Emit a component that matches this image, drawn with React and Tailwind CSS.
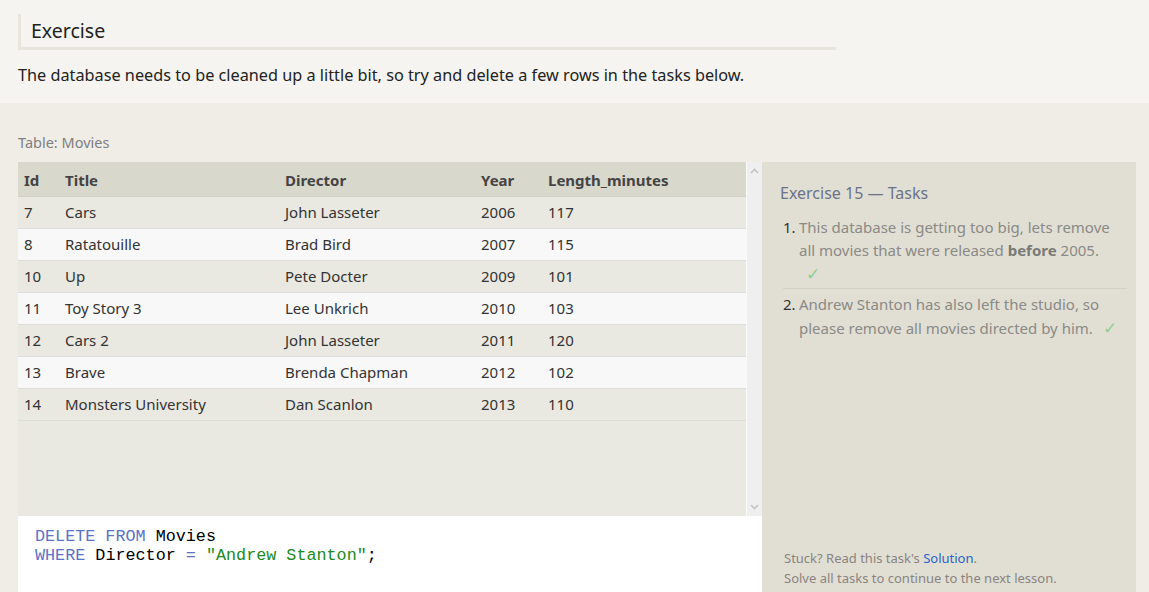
const rows = [
  [7, 'Cars', 'John Lasseter', 2006, 117],
  [8, 'Ratatouille', 'Brad Bird', 2007, 115],
  [10, 'Up', 'Pete Docter', 2009, 101],
  [11, 'Toy Story 3', 'Lee Unkrich', 2010, 103],
  [12, 'Cars 2', 'John Lasseter', 2011, 120],
  [13, 'Brave', 'Brenda Chapman', 2012, 102],
  [14, 'Monsters University', 'Dan Scanlon', 2013, 110],
]

function Row({ r, i }) {
  return (
    <div className={`flex h-[32px] items-center text-[15px] text-[#333] border-b border-[#dcdcd8] ${i % 2 ? 'bg-[#f8f8f8]' : 'bg-[#e9e8e1]'}`}>
      <div className="w-[47px] pl-[6px]">{r[0]}</div>
      <div className="w-[220px]">{r[1]}</div>
      <div className="w-[196px]">{r[2]}</div>
      <div className="w-[67px]">{r[3]}</div>
      <div>{r[4]}</div>
    </div>
  )
}

export default function App() {
  return (
    <div className="w-[1149px] h-[592px] overflow-hidden bg-[#efede6]" style={{ fontFamily: '"Noto Sans", "Open Sans", sans-serif' }}>
      <div className="bg-[#f5f4f0] px-[18px] pt-[14px] h-[103px]">
        <div className="w-[818px] h-[36px] border-l-[3px] border-b-[3px] border-[#e8e6dc] pl-[10px] flex items-center">
          <h2 className="text-[19.5px] text-[#222]">Exercise</h2>
        </div>
        <p className="mt-[13px] text-[16.25px] text-[#222]">The database needs to be cleaned up a little bit, so try and delete a few rows in the tasks below.</p>
      </div>

      <div className="pl-[18px]">
        <div className="pt-[29px] h-[59px] text-[14.5px] text-[#7f7f7f]">Table: Movies</div>
        <div className="flex">
          <div className="w-[744px] shrink-0 flex flex-col">
            <div className="flex h-[354px]">
              <div className="w-[728px] bg-[#e9e8e1]">
                <div className="flex h-[35px] items-center pt-[2px] bg-[#d9d8cc] text-[15px] font-bold text-[#444] border-b border-[#d2d1c6]">
                  <div className="w-[47px] pl-[6px]">Id</div>
                  <div className="w-[220px]">Title</div>
                  <div className="w-[196px]">Director</div>
                  <div className="w-[67px]">Year</div>
                  <div>Length_minutes</div>
                </div>
                {rows.map((r, i) => <Row key={r[0]} r={r} i={i} />)}
              </div>
              <div className="w-[16px] bg-[#efefef] border-l border-[#fafafa] flex flex-col items-center justify-between py-[6px]">
                <svg width="9" height="6" viewBox="0 0 9 6"><path d="M1 5 L4.5 1.5 L8 5" stroke="#c3c3c3" strokeWidth="1.6" fill="none" /></svg>
                <svg width="9" height="6" viewBox="0 0 9 6"><path d="M1 1 L4.5 4.5 L8 1" stroke="#c3c3c3" strokeWidth="1.6" fill="none" /></svg>
              </div>
            </div>
            <div className="bg-white h-[80px] pl-[17px] pt-[11px] text-[16.75px] leading-[19px]" style={{ fontFamily: '"Liberation Mono", monospace' }}>
              <div><span className="text-[#5a72c8]">DELETE FROM</span> <span className="text-black">Movies</span></div>
              <div><span className="text-[#5a72c8]">WHERE</span> <span className="text-black">Director</span> <span className="text-[#5a72c8]">=</span> <span className="text-[#218a21]">"Andrew Stanton"</span><span className="text-black">;</span></div>
            </div>
          </div>

          <div className="w-[374px] shrink-0 h-[430px] bg-[#e1dfd4] flex flex-col justify-between pl-[18px] pr-[9px] pt-[19px] pb-[4px]">
            <div>
              <h3 className="text-[16px] text-[#6b7388]">Exercise 15 — Tasks</h3>
              <ol className="mt-[11px] text-[15px] leading-[23px] text-[#8a8a86]">
                <li className="flex border-b border-[#d3d1c6] pb-[2px] ml-[3px]">
                  <span className="w-[16px] shrink-0 text-[#333]">1.</span>
                  <span>This database is getting too big, lets remove all movies that were released <b className="text-[#7a7a76]">before</b> 2005.<br /><span className="text-[#8fcf8f] text-[17px] ml-[7px]">✓</span></span>
                </li>
                <li className="flex pt-[4px] ml-[3px]">
                  <span className="w-[16px] shrink-0 text-[#333]">2.</span>
                  <span>Andrew Stanton has also left the studio, so please remove all movies directed by him. <span className="text-[#8fcf8f] text-[17px] ml-[6px]">✓</span></span>
                </li>
              </ol>
            </div>
            <div className="text-[13px] leading-[20px] text-[#8a8480] pl-[4px]">
              <div>Stuck? Read this task's <span className="text-[#2a62d0]">Solution</span>.</div>
              <div>Solve all tasks to continue to the next lesson.</div>
            </div>
          </div>
        </div>
      </div>
    </div>
  )
}
